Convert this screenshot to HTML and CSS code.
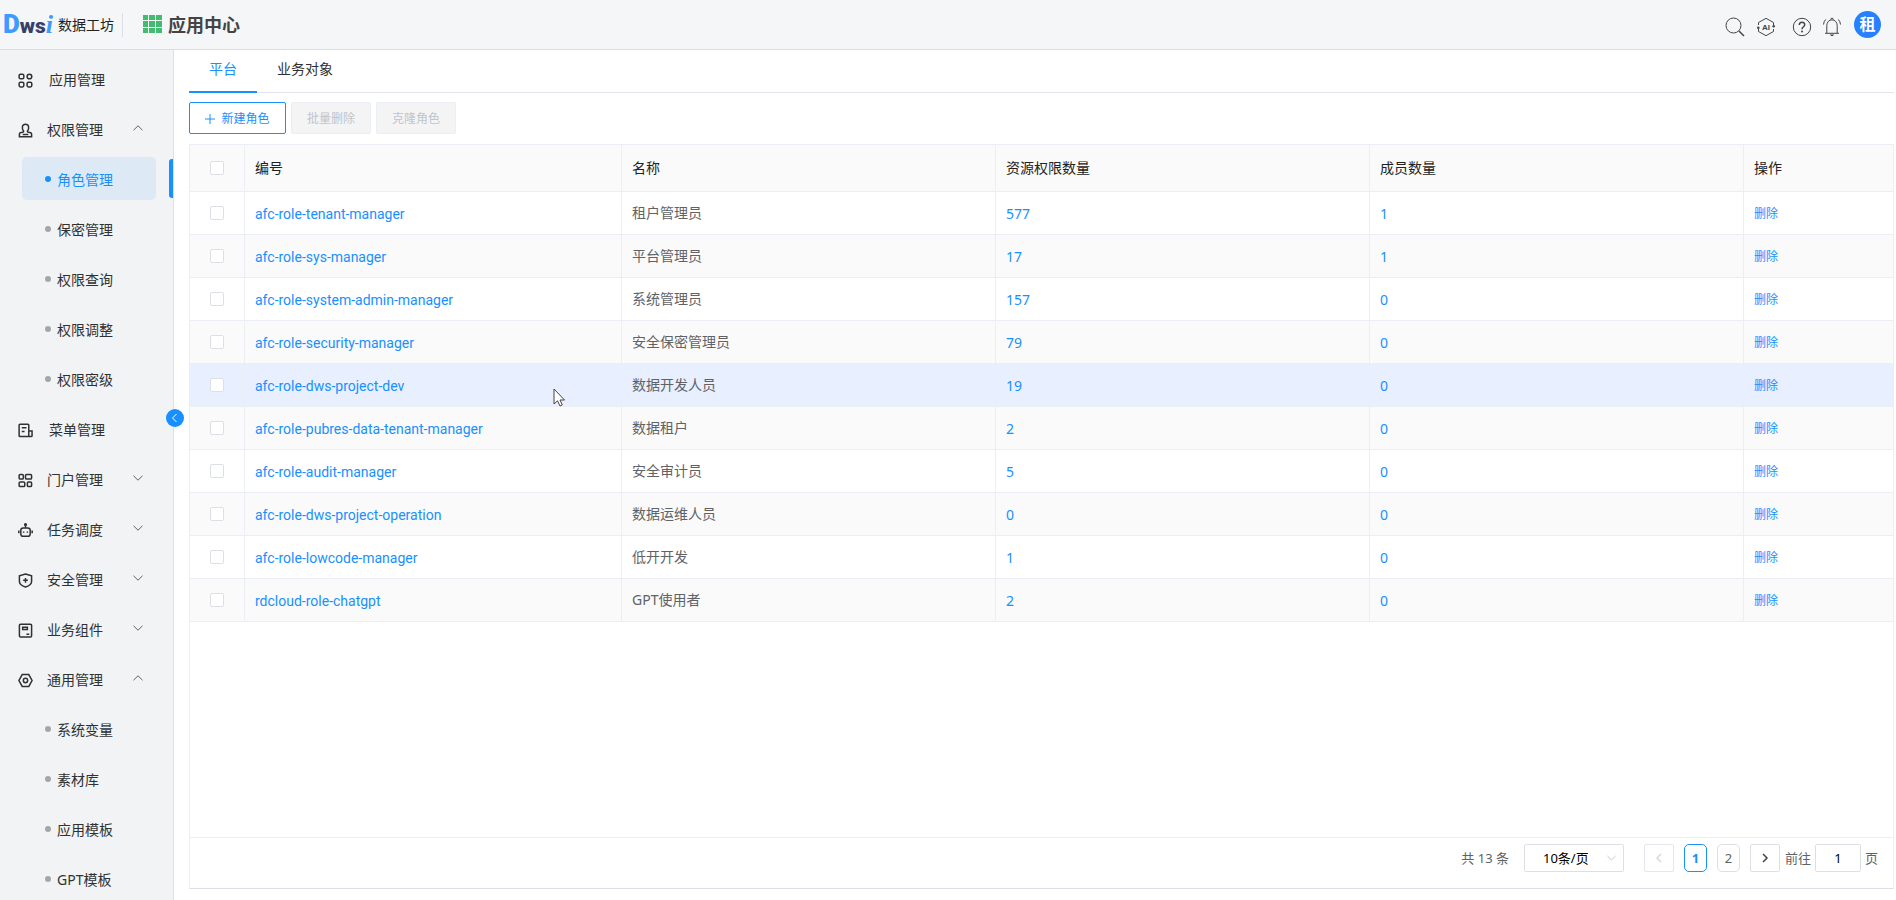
FILE: index.html
```
<!DOCTYPE html>
<html lang="zh-CN">
<head>
<meta charset="utf-8">
<title>应用中心</title>
<link rel="stylesheet" href="styles.css">
</head>
<body>
<header class="topbar">
  <div class="logo"><span class="logo-mark"><span class="logo-d">D</span><span class="logo-ws">ws</span><span class="logo-i">i</span></span><span class="logo-name">数据工坊</span></div>
  <svg class="grid-icon" viewBox="0 0 19 19" width="19" height="19"><path d="M0 0h5v5H0zM6 0h6v5H6zM13 0h6v5h-6zM0 6h5v6H0zM6 6h6v6H6zM13 6h6v6h-6zM0 13h5v5H0zM6 13h6v5H6zM13 13h6v5h-6z"/></svg>
  <h1 class="app-title">应用中心</h1>
  <div class="tools">
    <button class="tool" aria-label="搜索"><svg viewBox="0 0 20 20"><circle cx="8.500" cy="8.500" r="7.500"/><path d="M14 14l5 5" stroke-width="1.500"/></svg></button>
    <button class="tool tool-ai" aria-label="AI"><svg viewBox="0 0 20 20"><path d="M2.500 8V5.500L10 1.300l7.500 4.200V8M2.500 12v2.500l7.500 4.200 7.500-4.200V12"/><circle cx="2.300" cy="10.800" r="1.300" class="fill"/><circle cx="17.700" cy="9.200" r="1.300" class="fill"/><text x="10" y="13">AI</text></svg></button>
    <button class="tool" aria-label="帮助"><svg viewBox="0 0 20 20"><circle cx="10" cy="10" r="8.700"/><path d="M7.300 8c0-3.600 5.500-3.500 5.400-.2 0 2-2.700 2-2.700 4.400" stroke-width="1.500"/><circle cx="10" cy="14.500" r="1" class="fill"/></svg></button>
    <button class="tool" aria-label="通知"><svg viewBox="0 0 20 20"><path d="M3 16.300h14M4.800 16V8.500a5.200 5.700 0 0 1 10.400 0V16M8.700 2.500c0-1.800 2.600-1.800 2.600 0M3.700 2.500Q1.700 4.500 1.500 7.500M16.300 2.500q2 2 2.200 5"/><path d="M8 17.500h4l-1 1.500H9z" class="fill"/></svg></button>
    <button class="avatar">租</button>
  </div>
</header>
<div class="body">
  <aside class="sidebar">
    <nav class="menu">
      <a class="item leaf" href="#"><svg viewBox="0 0 16 16"><rect x="1.200" y="1.200" width="5" height="5" rx="1.500"/><rect x="9.700" y="1.200" width="5" height="5" rx="2.500"/><rect x="1.200" y="9.800" width="5" height="5" rx="1.500"/><rect x="9.700" y="9.800" width="5" height="5" rx="1.500"/></svg>应用管理</a>
      <a class="item" href="#"><svg viewBox="0 0 16 16"><path d="M6 8.800C3.500 5 4.500 1.200 8 1.200S12.500 5 10 8.800c0 1 .7 1.200 2.500 1.200 1.500 0 2 .8 2 2v2.700h-13V12c0-1.200.5-2 2-2C5.300 10 6 9.800 6 8.800zM5 12.200h6"/></svg>权限管理<svg class="chev" viewBox="0 0 10 6"><path d="M.5 5.200L5 .8l4.500 4.400"/></svg></a>
      <a class="sub active" href="#">角色管理</a>
      <a class="sub" href="#">保密管理</a>
      <a class="sub" href="#">权限查询</a>
      <a class="sub" href="#">权限调整</a>
      <a class="sub" href="#">权限密级</a>
      <a class="item leaf" href="#"><svg viewBox="0 0 16 16"><path d="M11.500 14.500H2.200q-1 0-1-1V2.200q0-1 1-1h8.300q1 0 1 1v11.300q0 1 1 1h1.500q1 0 1-1V8.500h-3.500M4 5h5M4 9h3"/></svg>菜单管理</a>
      <a class="item" href="#"><svg viewBox="0 0 16 16"><rect x="1.200" y="1.500" width="4.500" height="5" rx="1.200"/><rect x="8" y="1.500" width="6.500" height="5" rx="1.200"/><rect x="1.200" y="9.500" width="6" height="5" rx="1.200"/><rect x="10" y="9.500" width="4.500" height="5" rx="1.200"/></svg>门户管理<svg class="chev" viewBox="0 0 10 6"><path d="M.5.8L5 5.200 9.500.8"/></svg></a>
      <a class="item" href="#"><svg viewBox="0 0 16 16"><rect x="3" y="5.200" width="10" height="9" rx="2.500"/><path d="M8 5V2M.9 8v3M15.100 8v3M6 9v1.500M10 9v1.500"/><circle cx="8" cy="1.700" r=".9"/></svg>任务调度<svg class="chev" viewBox="0 0 10 6"><path d="M.5.8L5 5.200 9.500.8"/></svg></a>
      <a class="item" href="#"><svg viewBox="0 0 16 16"><path d="M8 1l6.500 2v6c0 3-3 4.800-6.500 6C4.500 13.800 1.500 12 1.500 9V3zM8 5.300v5M5.500 7.800h5"/></svg>安全管理<svg class="chev" viewBox="0 0 10 6"><path d="M.5.8L5 5.200 9.500.8"/></svg></a>
      <a class="item" href="#"><svg viewBox="0 0 16 16"><rect x="1.500" y="1.200" width="13" height="13.600" rx="1.200"/><path d="M5 4.500h5v2.500H5zM9 12h3"/></svg>业务组件<svg class="chev" viewBox="0 0 10 6"><path d="M.5.8L5 5.200 9.500.8"/></svg></a>
      <a class="item" href="#"><svg viewBox="0 0 16 16"><path d="M4.500 1.700h7L15 8l-3.500 6.300h-7L1 8z"/><circle cx="8" cy="8" r="2.300"/></svg>通用管理<svg class="chev" viewBox="0 0 10 6"><path d="M.5 5.200L5 .8l4.500 4.400"/></svg></a>
      <a class="sub" href="#">系统变量</a>
      <a class="sub" href="#">素材库</a>
      <a class="sub" href="#">应用模板</a>
      <a class="sub" href="#">GPT模板</a>
    </nav>
    <button class="collapse" aria-label="收起"><svg viewBox="0 0 10 10" width="10" height="10"><path d="M6.500 1L2.500 5l4 4"/></svg></button>
  </aside>
  <main class="content">
    <div class="tabs"><button class="tab on">平台</button><button class="tab">业务对象</button></div>
    <div class="actions">
      <button class="btn primary"><svg viewBox="0 0 10 10" width="10" height="10"><path d="M5 0v10M0 5h10"/></svg>新建角色</button>
      <button class="btn" disabled>批量删除</button>
      <button class="btn" disabled>克隆角色</button>
    </div>
    <section class="panel">
      <table class="grid">
        <colgroup><col class="c-check"><col class="c-code"><col><col><col><col class="c-op"></colgroup>
        <thead><tr><th><input type="checkbox" aria-label="全选"></th><th>编号</th><th>名称</th><th>资源权限数量</th><th>成员数量</th><th>操作</th></tr></thead>
        <tbody>
          <tr><td><input type="checkbox" aria-label="选择"></td><td><a class="code" href="#">afc-role-tenant-manager</a></td><td>租户管理员</td><td><a class="num" href="#">577</a></td><td><a class="num" href="#">1</a></td><td><a class="del" href="#">删除</a></td></tr>
          <tr><td><input type="checkbox" aria-label="选择"></td><td><a class="code" href="#">afc-role-sys-manager</a></td><td>平台管理员</td><td><a class="num" href="#">17</a></td><td><a class="num" href="#">1</a></td><td><a class="del" href="#">删除</a></td></tr>
          <tr><td><input type="checkbox" aria-label="选择"></td><td><a class="code" href="#">afc-role-system-admin-manager</a></td><td>系统管理员</td><td><a class="num" href="#">157</a></td><td><a class="num" href="#">0</a></td><td><a class="del" href="#">删除</a></td></tr>
          <tr><td><input type="checkbox" aria-label="选择"></td><td><a class="code" href="#">afc-role-security-manager</a></td><td>安全保密管理员</td><td><a class="num" href="#">79</a></td><td><a class="num" href="#">0</a></td><td><a class="del" href="#">删除</a></td></tr>
          <tr class="hovered"><td><input type="checkbox" aria-label="选择"></td><td class="pointed"><a class="code" href="#">afc-role-dws-project-dev</a><svg class="cursor" viewBox="0 0 13 19" width="13" height="19"><path d="M1 1v15l3.500-3.200L7 18l2.300-1.100L7 12h4.500z"/></svg></td><td>数据开发人员</td><td><a class="num" href="#">19</a></td><td><a class="num" href="#">0</a></td><td><a class="del" href="#">删除</a></td></tr>
          <tr><td><input type="checkbox" aria-label="选择"></td><td><a class="code" href="#">afc-role-pubres-data-tenant-manager</a></td><td>数据租户</td><td><a class="num" href="#">2</a></td><td><a class="num" href="#">0</a></td><td><a class="del" href="#">删除</a></td></tr>
          <tr><td><input type="checkbox" aria-label="选择"></td><td><a class="code" href="#">afc-role-audit-manager</a></td><td>安全审计员</td><td><a class="num" href="#">5</a></td><td><a class="num" href="#">0</a></td><td><a class="del" href="#">删除</a></td></tr>
          <tr><td><input type="checkbox" aria-label="选择"></td><td><a class="code" href="#">afc-role-dws-project-operation</a></td><td>数据运维人员</td><td><a class="num" href="#">0</a></td><td><a class="num" href="#">0</a></td><td><a class="del" href="#">删除</a></td></tr>
          <tr><td><input type="checkbox" aria-label="选择"></td><td><a class="code" href="#">afc-role-lowcode-manager</a></td><td>低开开发</td><td><a class="num" href="#">1</a></td><td><a class="num" href="#">0</a></td><td><a class="del" href="#">删除</a></td></tr>
          <tr><td><input type="checkbox" aria-label="选择"></td><td><a class="code" href="#">rdcloud-role-chatgpt</a></td><td>GPT使用者</td><td><a class="num" href="#">2</a></td><td><a class="num" href="#">0</a></td><td><a class="del" href="#">删除</a></td></tr>
        </tbody>
      </table>
      <footer class="pager">
        <span class="total">共 13 条</span>
        <span class="size"><select aria-label="每页条数"><option>10条/页</option></select><svg viewBox="0 0 10 6" width="9" height="6"><path d="M.5.8L5 5.200 9.500.8"/></svg></span>
        <button class="arrow" disabled aria-label="上一页"><svg viewBox="0 0 10 10" width="10" height="10"><path d="M7 1L3 5l4 4"/></svg></button>
        <button class="page on">1</button>
        <button class="page">2</button>
        <button class="arrow" aria-label="下一页"><svg viewBox="0 0 10 10" width="10" height="10"><path d="M3 1l4 4-4 4"/></svg></button>
        <label class="jump">前往<input type="text" value="1">页</label>
      </footer>
    </section>
  </main>
</div>
</body>
</html>
```
FILE: styles.css
```
* { box-sizing: border-box; }
body {
  margin: 0;
  height: 100vh;
  display: flex;
  flex-direction: column;
  overflow: hidden;
  background: #fff;
  color: #303133;
  font: 14px/20px "Noto Sans", "Noto Sans CJK SC", sans-serif;
}
button, input, select { font: inherit; color: inherit; margin: 0; padding: 0; }
button { background: none; border: 0; }
a { color: #1890ff; text-decoration: none; }
svg { fill: none; stroke: currentColor; flex: none; }

.topbar {
  flex: none;
  height: 50px;
  display: flex;
  align-items: center;
  padding: 0 15px 0 3px;
  background: #f4f6f8;
  border-bottom: 1px solid #dcdddf;
}
.logo {
  display: flex;
  align-items: center;
  width: 120px;
  height: 24px;
  border-right: 1px solid #dcdfe6;
  color: #222;
}
.logo-mark { display: flex; align-items: baseline; width: 55px; line-height: 24px; font-family: Roboto, sans-serif; font-weight: 900; }
.logo-d { font-size: 26px; color: #3d9bff; }
.logo-ws { font-size: 21px; color: #363f68; }
.logo-i { font-size: 26px; font-style: italic; font-family: "Liberation Serif", serif; color: #3d9bff; }
.grid-icon { margin-left: 20px; fill: #42bd70; stroke: none; }
.app-title { margin: 0 0 0 6px; font-size: 18px; line-height: 24px; font-weight: 700; color: #444; }
.tools { margin-left: auto; display: flex; align-items: center; gap: 10px; color: #444; }
.tool { display: flex; width: 20px; height: 20px; margin-top: 4px; }
.tool:first-child { margin-right: 1px; }
.tool svg { width: 20px; height: 20px; }
.tool-ai { margin-right: 6px; }
.tool text { font: 700 8px "Liberation Sans", sans-serif; text-anchor: middle; fill: #444; stroke: none; }
.tool .fill { fill: currentColor; stroke: none; }
.avatar { width: 27px; height: 27px; margin-left: 2px; border-radius: 50%; background: #2680ff; color: #fff; font-size: 16px; font-weight: 700; line-height: 27px; }

.body { flex: 1; display: flex; min-height: 0; }
.sidebar { position: relative; flex: none; width: 174px; background: #f1f3f5; border-right: 1px solid #dcdfe3; }
.menu { height: 100%; overflow: hidden; display: flex; flex-direction: column; padding-top: 5px; }
.item, .sub { flex: none; display: flex; align-items: center; height: 50px; color: #303133; position: relative; }
.item { padding: 0 30px 0 18px; gap: 14px; }
.item > svg:first-child { width: 15px; height: 15px; stroke-width: 1.600; }
.leaf { gap: 16px; }
.item .chev { width: 10px; height: 6px; margin: 0 0 4px auto; color: #606266; stroke-width: 1; }
.sub { height: 43px; margin: 2px 17px 5px 22px; padding: 2px 0 0 23px; gap: 6px; border-radius: 5px; }
.sub::before { content: ""; width: 6px; height: 6px; margin-bottom: 2px; border-radius: 50%; background: #a5a6a8; }
.active { color: #1890ff; background: #dde9f5; }
.active::before { background: #1890ff; }
.active::after { content: ""; position: absolute; top: 2px; right: -17px; width: 4px; height: 39px; background: #1890ff; border-radius: 3px 0 0 3px; }
.collapse { position: absolute; z-index: 2; right: -11px; top: 359px; width: 18px; height: 18px; border-radius: 50%; background: #1890ff; color: #fff; display: flex; align-items: center; justify-content: center; }

.content { flex: 1; min-width: 0; display: flex; flex-direction: column; padding: 0 2px 11px 15px; }
.tabs { flex: none; display: flex; height: 43px; border-bottom: 1px solid #e1e4ed; }
.tab { height: 43px; padding: 0 20px 6px; }
.tab.on { color: #1890ff; border-bottom: 2px solid #1890ff; padding-bottom: 4px; }
.actions { flex: none; display: flex; gap: 5px; margin: 9px 0 10px; }
.btn { display: flex; align-items: center; justify-content: center; gap: 6px; height: 32px; width: 80px; padding-top: 2px; border: 1px solid #ebeef5; border-radius: 2px; background: #f4f4f5; color: #c0c4cc; font-size: 12px; }
.primary { width: 97px; background: #fff; border-color: #1890ff; color: #1890ff; }

.panel { flex: 1; display: flex; flex-direction: column; border: 1px solid #ebeef5; border-bottom-color: #dcdfe6; }
.grid { width: 100%; table-layout: fixed; border-spacing: 0; }
.c-check { width: 55px; }
.c-code { width: 377px; }
.c-op { width: 149px; }
th, td { padding: 0 10px; text-align: left; font-weight: 400; border-right: 1px solid #ebeef5; border-bottom: 1px solid #ebeef5; line-height: 20px; }
th:last-child, td:last-child { border-right: 0; }
th:first-child, td:first-child { text-align: center; }
th { height: 47px; color: #222; background: #fafafa; }
td { height: 43px; color: #606266; }
tbody tr:nth-child(even) { background: #fafafa; }
tbody .hovered { background: #e8efff; }
.code, .num { display: block; padding-top: 2px; }
.code { font-family: Roboto, sans-serif; }
.del { font-size: 12px; }
.grid input { display: block; appearance: none; width: 14px; height: 14px; margin: 0 auto; border: 1px solid #dcdfe6; border-radius: 2px; background: #fff; }
.pointed { position: relative; }
.cursor { position: absolute; left: 308px; top: 24px; fill: #fff; color: #444; }

.pager { margin-top: auto; display: flex; align-items: center; justify-content: flex-end; gap: 10px; padding: 6px 15px 16px 0; border-top: 1px solid #ebeef5; font-size: 13px; color: #606266; }
.total { margin-right: 5px; }
.size { position: relative; display: flex; margin-right: 10px; }
.size select { appearance: none; width: 100px; height: 28px; padding: 0 35px 0 18px; text-align: right; border: 1px solid #dcdfe6; border-radius: 2px; background: #fff; color: #000; }
.size svg { position: absolute; right: 8px; top: 11px; color: #c0c4cc; }
.arrow { width: 30px; height: 28px; border: 1px solid #dcdfe6; border-radius: 2px; display: flex; align-items: center; justify-content: center; color: #444; }
.arrow svg { stroke-width: 1.500; }
.arrow:disabled { color: #d5d8df; border-color: #e4e7ed; }
.page { width: 23px; height: 28px; border: 1px solid #dcdfe6; border-radius: 5px; }
.page.on { color: #1890ff; border-color: #1890ff; font-weight: 700; }
.jump { display: flex; align-items: center; gap: 4px; margin-left: -5px; }
.jump input { width: 46px; height: 28px; border: 1px solid #dcdfe6; border-radius: 2px; text-align: center; color: #000; }
```
